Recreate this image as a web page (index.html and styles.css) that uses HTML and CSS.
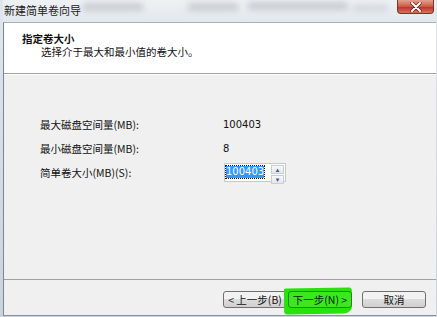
FILE: index.html
```html
<!DOCTYPE html>
<html lang="zh-CN">
<head>
    <meta charset="UTF-8">
    <title>新建简单卷向导</title>
    <link rel="stylesheet" href="styles.css">
</head>
<body>
    <div class="window">
        <div class="titlebar">
            <span class="title">新建简单卷向导</span>
            <div class="blur b1"></div>
            <div class="blur b2"></div>
            <div class="blur b3"></div>
            <div class="blur b4"></div>
            <div class="close">
                <svg width="14" height="10" viewBox="0 0 14 10">
                    <path d="M3 1 L11 9 M11 1 L3 9" stroke="#5a1a14" stroke-width="3.2" stroke-linecap="round"/>
                    <path d="M3 1 L11 9 M11 1 L3 9" stroke="#ffffff" stroke-width="2" stroke-linecap="round"/>
                </svg>
            </div>
        </div>
        <div class="client">
            <div class="header">
                <div class="header-title">指定卷大小</div>
                <div class="header-sub">选择介于最大和最小值的卷大小。</div>
            </div>
            <div class="content">
                <div class="row">
                    <span class="label">最大磁盘空间量(MB):</span>
                    <span class="value">100403</span>
                </div>
                <div class="row">
                    <span class="label">最小磁盘空间量(MB):</span>
                    <span class="value">8</span>
                </div>
                <div class="row">
                    <span class="label">简单卷大小(MB)(S):</span>
                    <div class="spin">
                        <div class="spin-text"><span class="selected">100403</span></div>
                        <div class="spin-buttons">
                            <div class="spin-btn">&#9652;</div>
                            <div class="spin-btn">&#9662;</div>
                        </div>
                    </div>
                </div>
            </div>
            <div class="footer">
                <button class="btn">&lt; 上一步(B)</button>
                <div class="marker">
                    <button class="btn btn-next">下一步(N) &gt;</button>
                </div>
                <button class="btn btn-cancel">取消</button>
            </div>
        </div>
    </div>
</body>
</html>
```

FILE: styles.css
```css
body {
    margin: 0;
    padding: 0;
    background: #ffffff;
    font-family: "Noto Sans CJK SC", "DejaVu Sans", sans-serif;
    font-size: 10.5px;
    color: #111;
}

.window {
    width: 437px;
    height: 317px;
    box-sizing: border-box;
    display: flex;
    flex-direction: column;
    background: linear-gradient(to bottom, #dfe6ee, #c9d3dd);
    padding: 0 1px 1px 3px;
    overflow: hidden;
}

.titlebar {
    position: relative;
    height: 22px;
    flex: none;
    display: flex;
    align-items: flex-start;
    background: linear-gradient(to bottom, #eef1f4, #e3e8ed);
}

.title {
    margin: 3px 0 0 1px;
    font-size: 11px;
    line-height: 14px;
    color: #1a1a1a;
    position: relative;
    z-index: 1;
}

.blur {
    position: absolute;
    height: 8px;
    background: #b9bfc6;
    filter: blur(3px);
    opacity: 0.7;
}

.b1 { left: 80px; top: 3px; width: 60px; }
.b2 { left: 185px; top: 3px; width: 50px; }
.b3 { left: 245px; top: 2px; width: 100px; }
.b4 { left: 350px; top: 4px; width: 35px; opacity: 0.4; }

.close {
    position: absolute;
    right: 2px;
    top: 0;
    width: 37px;
    height: 14px;
    box-sizing: border-box;
    border: 1px solid #7a3328;
    border-top: none;
    border-radius: 0 0 4px 4px;
    background: linear-gradient(to bottom, #e3a190, #cf5a44 50%, #b8372a 55%, #d8735d);
    display: flex;
    align-items: center;
    justify-content: center;
}

.client {
    flex: 1;
    display: flex;
    flex-direction: column;
    background: #f0f0f0;
    border-left: 1px solid #7c8690;
    border-top: 1px solid #a8b0b8;
    border-bottom: 1px solid #8a9198;
}

.header {
    height: 51px;
    flex: none;
    box-sizing: border-box;
    background: #ffffff;
    border-bottom: 1px solid #a0a0a0;
    padding: 9px 0 0 18px;
}

.header-title {
    font-weight: bold;
    line-height: 13px;
}

.header-sub {
    margin-left: 19px;
    line-height: 13px;
}

.content {
    flex: 1;
    padding: 37px 0 0 36px;
    border-top: 1px solid #ffffff;
}

.row {
    display: flex;
    align-items: center;
    height: 24px;
}

.label {
    width: 183px;
}

.value {
    font-family: "DejaVu Sans", sans-serif;
    font-size: 10px;
}

.spin {
    display: flex;
    width: 62px;
    height: 19px;
    box-sizing: border-box;
    border: 1px solid #c5c9ce;
    background: #ffffff;
    padding: 1px;
    margin-left: 1px;
}

.spin-text {
    flex: 1;
    display: flex;
    align-items: center;
}

.selected {
    background: #3399ff;
    color: #ffffff;
    font-family: "DejaVu Sans", sans-serif;
    font-size: 10px;
    line-height: 12px;
    outline: 1px dotted #1a1a1a;
}

.spin-buttons {
    width: 13px;
    display: flex;
    flex-direction: column;
    gap: 1px;
}

.spin-btn {
    flex: 1;
    font-size: 7px;
    line-height: 7px;
    color: #3c5a9a;
    text-align: center;
    border: 1px solid #c9ced4;
    background: linear-gradient(to bottom, #f8f8f8, #e4e6e8);
}

.footer {
    height: 36px;
    flex: none;
    box-sizing: border-box;
    border-top: 1px solid #a0a0a0;
    display: flex;
    align-items: center;
    padding: 4px 0 0 219px;
}

.btn {
    width: 64px;
    height: 17px;
    padding: 0;
    font-family: "Noto Sans CJK SC", "DejaVu Sans", sans-serif;
    font-size: 10.5px;
    line-height: 14px;
    color: #111;
    border: 1px solid #707070;
    border-radius: 3px;
    background: linear-gradient(to bottom, #f2f2f2 50%, #dcdcdc 50%, #d0d0d0);
}

.marker {
    position: relative;
    margin-left: 1px;
}

.marker::before {
    content: "";
    position: absolute;
    left: -4px;
    top: -3px;
    width: 68px;
    height: 26px;
    background: #29e20c;
    border-radius: 2px 3px 8px 3px;
    transform: rotate(-1deg);
}

.btn-next {
    position: relative;
    background: #3be81c;
    border-color: #1c8a10;
    color: #0a200a;
}

.btn-cancel {
    margin-left: 10px;
}
```
